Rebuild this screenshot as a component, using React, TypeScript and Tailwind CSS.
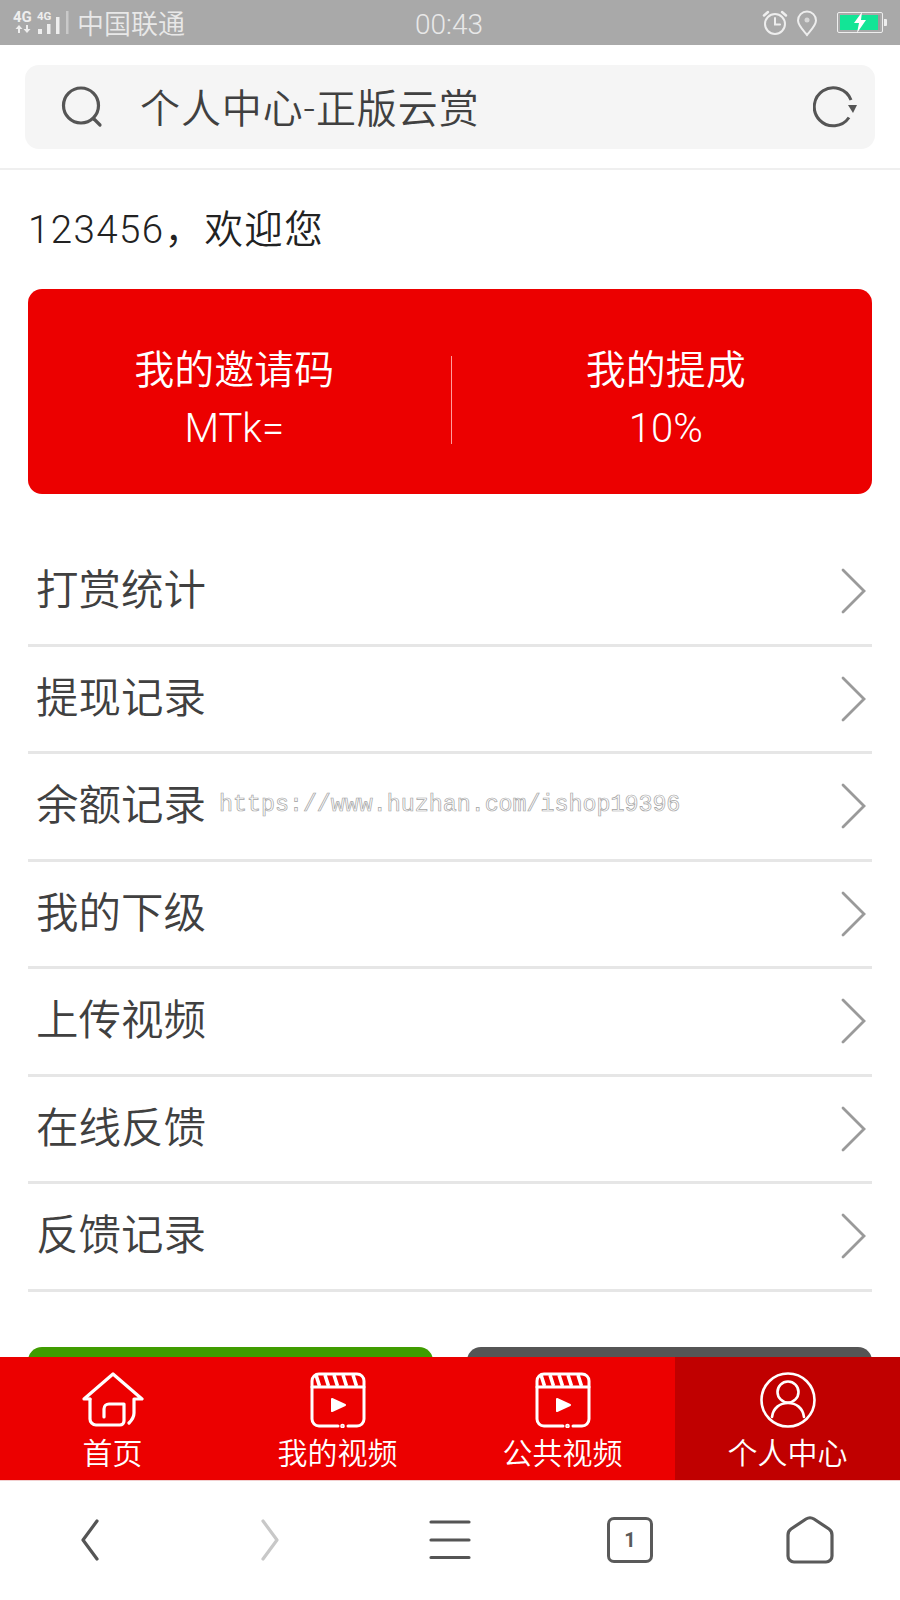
const CJK = "font-['Roboto','Noto_Sans_CJK_SC',sans-serif]";

const rows = ["打赏统计", "提现记录", "余额记录", "我的下级", "上传视频", "在线反馈", "反馈记录"];

function VideoIcon() {
  return (
    <svg width="56" height="56" viewBox="0 0 56 56" fill="none" stroke="#fff" strokeWidth="3" strokeLinecap="round" strokeLinejoin="round">
      <path d="M38 54H47a7 7 0 0 0 7-7V9a7 7 0 0 0-7-7H9a7 7 0 0 0-7 7v38a7 7 0 0 0 7 7h19" />
      <path d="M2 15H54" />
      <path d="M6 3l3.500 11M15 3l3.500 11M24 3l3.500 11M33 3l3.500 11M43 3l3.500 11" strokeWidth="3.600" strokeLinecap="butt" />
      <path d="M22 27L35 33L22 39Z" fill="#fff" strokeWidth="2" />
      <circle cx="32.500" cy="54" r="0.800" fill="#fff" />
    </svg>
  );
}

function HomeIcon() {
  return (
    <svg width="62" height="56" viewBox="0 0 62 56" fill="none" stroke="#fff" strokeWidth="3.200" strokeLinecap="round" strokeLinejoin="round">
      <path d="M8 27H2L31 2L60 27H52V41C52 45 50 48 47 51" />
      <path d="M8 27V47a6 6 0 0 0 6 6H38a4 4 0 0 0 4-4V32H27a5 5 0 0 0-5 5V45" />
    </svg>
  );
}

function UserIcon() {
  return (
    <svg width="56" height="56" viewBox="0 0 56 56" fill="none" stroke="#fff" strokeWidth="2.600" strokeLinecap="round">
      <circle cx="28" cy="28" r="26.500" />
      <circle cx="28" cy="20" r="10.500" />
      <path d="M12 45C13 36 20 31 28 31S43 36 44 45" />
    </svg>
  );
}

function Tab({ icon, label, active }: { icon: React.ReactNode; label: string; active?: boolean }) {
  return (
    <div className={`flex-1 flex flex-col items-center pt-[15px] ${active ? "bg-[#c00000]" : ""}`}>
      <div className="h-[56px] flex items-center justify-center">{icon}</div>
      <div className="text-[30px] leading-[40px] mt-[6px] text-white font-[350]">{label}</div>
    </div>
  );
}

export default function App() {
  return (
    <div className={`relative w-[900px] h-[1600px] overflow-hidden bg-white flex flex-col ${CJK}`}>
      {/* status bar */}
      <div className="h-[45px] shrink-0 bg-[#a9a9a9] flex items-center text-[#e8e8e8] relative">
        <svg width="70" height="45" viewBox="0 0 70 45" className="shrink-0" fill="#eee">
          <text x="13" y="22" fontSize="15" fontWeight="700" fontFamily="Roboto, sans-serif">4G</text>
          <text x="37" y="20" fontSize="11.500" fontWeight="700" fontFamily="Roboto, sans-serif">4G</text>
          <path d="M19 25l3.500 4H20v4h-2v-4h-2.500zM27 33l-3.500-4H26v-4h2v4h2.500z" />
          <rect x="38" y="29" width="4" height="5" />
          <rect x="47" y="24" width="3.500" height="10" />
          <rect x="56" y="17" width="3.500" height="17" />
          <rect x="66" y="11" width="2.500" height="23" fill="#c9c9c9" />
        </svg>
        <span className="ml-[7px] text-[27px] leading-[45px] pt-[5px] font-[350]">中国联通</span>
        <span className="absolute left-[415px] top-0 text-[28px] leading-[50px] font-light">00:43</span>
        <svg className="absolute left-[762px] top-[10px]" width="26" height="26" viewBox="0 0 26 26" fill="none" stroke="#eee" strokeWidth="2" strokeLinecap="round">
          <circle cx="13" cy="14" r="10" />
          <path d="M13 8v6.500h5" />
          <path d="M2 5.500L6 2M24 5.500L20 2" strokeWidth="2.500" />
        </svg>
        <svg className="absolute left-[796px] top-[10px]" width="22" height="27" viewBox="0 0 22 27" fill="none" stroke="#eee" strokeWidth="2">
          <path d="M11 25C6 19 2 15 2 10.500a9 9 0 0 1 18 0C20 15 16 19 11 25Z" />
          <circle cx="11" cy="10" r="2.500" fill="#d8d8d8" stroke="none" />
        </svg>
        <div className="absolute left-[837px] top-[12px] w-[46px] h-[21px] border border-[#eee] rounded-[2px] p-[2px]">
          <div className="relative h-full bg-[#12e596] flex items-center justify-center">
            <div className="absolute right-0 top-0 h-full w-[2px] bg-[#9a9a9a]" />
            <svg width="14" height="21" viewBox="0 0 14 21" fill="#fff" className="relative"><path d="M9 0L1 11h5l-2 10 9-13H8z" /></svg>
          </div>
        </div>
        <div className="absolute left-[884px] top-[19px] w-[3px] h-[7px] bg-[#eee] rounded-r-[1px]" />
      </div>

      {/* search bar */}
      <div className="shrink-0 h-[125px] border-b-2 border-[#efefef] pt-[20px] px-[25px]">
        <div className="h-[84px] bg-[#f5f5f5] rounded-[14px] flex items-center pl-[36px] pr-[16px]">
          <svg width="42" height="42" viewBox="0 0 42 42" fill="none" stroke="#555" strokeWidth="3.200" strokeLinecap="round">
            <circle cx="20" cy="19.500" r="17.500" />
            <path d="M33 33l6 6" />
          </svg>
          <span className="ml-[37px] text-[40px] leading-none text-[#404040] pt-[5px] tracking-[0.9px] font-[350]">个人中心-正版云赏</span>
          <svg className="ml-auto" width="46" height="42" viewBox="0 0 46 42" fill="none" stroke="#555" strokeWidth="3">
            <path d="M38 14A19 19 0 1 0 36 31.500" />
            <path d="M35 19L44 19L40 27Z" fill="#555" stroke="none" />
          </svg>
        </div>
      </div>

      <main className="flex-1 min-h-0 overflow-hidden px-[28px]">
        <div className="h-[119px] flex items-center">
          <span className="text-[38.500px] text-[#222] tracking-[1.400px] leading-none pt-[2px] font-[350]">123456，欢迎您</span>
        </div>

        <div className="h-[205px] rounded-[14px] bg-[#ec0000] flex items-center pt-[16px] text-white text-[40px] leading-[58px] font-[350]">
          <div className="flex-1 text-center mr-[10px]">
            <div>我的邀请码</div>
            <div>MTk=</div>
          </div>
          <div className="w-px h-[88px] bg-[#ff9c9c]" />
          <div className="flex-1 text-center ml-[8px]">
            <div>我的提成</div>
            <div>10%</div>
          </div>
        </div>

        <div className="mt-[45px]">
          {rows.map((r) => (
            <div key={r} className="h-[107.500px] border-b-[3px] border-[#e6e6e6] flex items-center pl-[8px] pr-[6px]">
              <span className="text-[42.500px] text-[#404040] leading-none font-[350]">{r}</span>
              <svg className="ml-auto" width="26" height="46" viewBox="0 0 26 46" fill="none" stroke="#9a9a9a" strokeWidth="2.800" strokeLinecap="round">
                <path d="M3 2L24 23L3 44" />
              </svg>
            </div>
          ))}
        </div>

        <div className="mt-[55px] flex justify-between">
          <div className="w-[405px] h-[80px] rounded-[14px] bg-[#3f9c00]" />
          <div className="w-[405px] h-[80px] rounded-[14px] bg-[#555555]" />
        </div>
      </main>

      {/* watermark */}
      <div className="absolute left-[219px] top-[789px] font-['Liberation_Mono',monospace] text-[23.300px] leading-[32px] text-white opacity-95 [-webkit-text-stroke:0.7px_#a0a0a0] whitespace-nowrap">
        https://www.huzhan.com/ishop19396
      </div>

      {/* tab bar */}
      <div className="shrink-0 h-[124px] bg-[#ec0000] flex border-b border-[#f2d0d0]">
        <Tab icon={<HomeIcon />} label="首页" />
        <Tab icon={<VideoIcon />} label="我的视频" />
        <Tab icon={<VideoIcon />} label="公共视频" />
        <Tab icon={<UserIcon />} label="个人中心" active />
      </div>

      {/* browser bar */}
      <div className="shrink-0 h-[119px] bg-white grid grid-cols-5 items-center pb-[2px]">
        <div className="flex justify-center">
          <svg width="20" height="42" viewBox="0 0 20 42" fill="none" stroke="#555" strokeWidth="3.200" strokeLinecap="round" strokeLinejoin="round"><path d="M17 2L3 21L17 40" /></svg>
        </div>
        <div className="flex justify-center">
          <svg width="20" height="42" viewBox="0 0 20 42" fill="none" stroke="#c8c8c8" strokeWidth="3.200" strokeLinecap="round" strokeLinejoin="round"><path d="M3 2L17 21L3 40" /></svg>
        </div>
        <div className="flex justify-center">
          <svg width="42" height="42" viewBox="0 0 42 42" fill="none" stroke="#555" strokeWidth="3.200" strokeLinecap="round"><path d="M2 3H40M2 21H40M2 38.500H40" /></svg>
        </div>
        <div className="flex justify-center">
          <div className="w-[46px] h-[46px] border-[3px] border-[#5a5a5a] rounded-[7px] flex items-center justify-center text-[20px] font-bold text-[#5a5a5a] leading-none">1</div>
        </div>
        <div className="flex justify-center">
          <svg width="48" height="48" viewBox="0 0 48 48" fill="none" stroke="#5a5a5a" strokeWidth="3.200" strokeLinejoin="round">
            <path d="M20 3Q24 0.500 28 3L43 13Q46 15 46 19V40a6 6 0 0 1-6 6H8a6 6 0 0 1-6-6V19Q2 15 5 13Z" />
          </svg>
        </div>
      </div>
    </div>
  );
}
